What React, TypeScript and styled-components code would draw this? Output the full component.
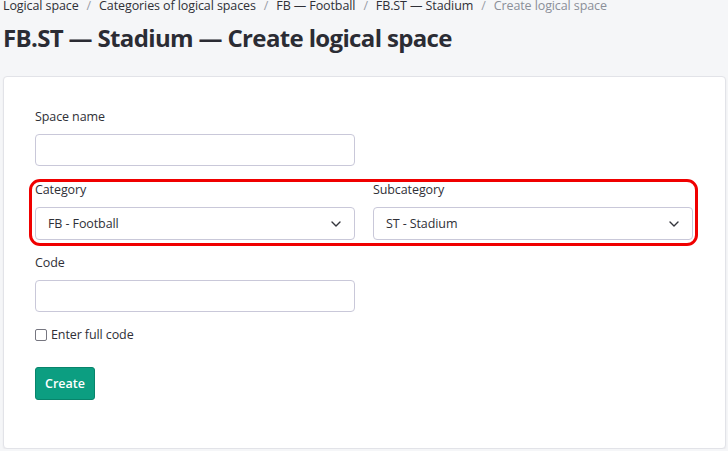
import React from "react";
import styled, { createGlobalStyle } from "styled-components";

const GlobalStyle = createGlobalStyle`
  html, body {
    margin: 0;
    background: #f5f6f8;
    font-family: "Open Sans", "Noto Sans", Arial, sans-serif;
    color: #2f3037;
  }
`;

type Crumb = { label: string; active?: boolean };

const crumbs: Crumb[] = [
  { label: "Logical space" },
  { label: "Categories of logical spaces" },
  { label: "FB — Football" },
  { label: "FB.ST — Stadium" },
  { label: "Create logical space", active: true },
];

const Chevron = () => (
  <svg width="12" height="12" viewBox="0 0 12 12" fill="none">
    <path d="M2 4l4 4 4-4" stroke="#34353c" strokeWidth="1.4" strokeLinecap="round" strokeLinejoin="round" />
  </svg>
);

type SelectProps = { label: string; value: string };

const SelectField = ({ label, value }: SelectProps) => (
  <Field>
    <Label>{label}</Label>
    <SelectBox>
      <span>{value}</span>
      <Chevron />
    </SelectBox>
  </Field>
);

export default function App() {
  return (
    <>
      <GlobalStyle />
      <Page>
        <Breadcrumbs>
          {crumbs.map((c, i) => (
            <React.Fragment key={c.label}>
              {i > 0 && <Sep>/</Sep>}
              <Crumb $active={c.active}>{c.label}</Crumb>
            </React.Fragment>
          ))}
        </Breadcrumbs>
        <Title>FB.ST — Stadium — Create logical space</Title>
        <Card>
          <Field>
            <Label>Space name</Label>
            <Input />
          </Field>
          <HighlightRow>
            <SelectField label="Category" value="FB - Football" />
            <SelectField label="Subcategory" value="ST - Stadium" />
          </HighlightRow>
          <Field>
            <Label>Code</Label>
            <Input />
          </Field>
          <CheckRow>
            <Box />
            Enter full code
          </CheckRow>
          <Button>Create</Button>
        </Card>
      </Page>
    </>
  );
}

const Page = styled.div`
  padding: 0 2px 0 3px;
`;

const Breadcrumbs = styled.nav`
  display: flex;
  align-items: center;
  font-size: 12.5px;
  letter-spacing: -0.1px;
  line-height: 16px;
  margin-top: -2px;
  white-space: nowrap;
`;

const Crumb = styled.span<{ $active?: boolean }>`
  color: ${(p) => (p.$active ? "#8b8f99" : "#2f3037")};
`;

const Sep = styled.span`
  color: #9a9ea8;
  margin: 0 8px;
`;

const Title = styled.h1`
  margin: 8px 0 0;
  font-size: 24px;
  line-height: 32px;
  font-weight: 700;
  color: #2b2c34;
  letter-spacing: -0.65px;
`;

const Card = styled.div`
  margin-top: 22px;
  background: #fff;
  border: 1px solid #e2e3e8;
  border-radius: 4px;
  box-shadow: 0 1px 2px rgba(0, 0, 0, 0.05);
  padding: 31px 31px 48px;
  display: flex;
  flex-direction: column;
  align-items: flex-start;
  gap: 14px;
`;

const Field = styled.div`
  display: flex;
  flex-direction: column;
  gap: 8px;
  width: 320px;
`;

const Label = styled.label`
  font-size: 12.5px;
  letter-spacing: -0.1px;
  line-height: 18px;
  color: #2f3037;
`;

const Input = styled.input`
  box-sizing: border-box;
  width: 320px;
  height: 32px;
  border: 1px solid #c9c8d9;
  border-radius: 4px;
  background: #fff;
  outline: none;
`;

const SelectBox = styled.div`
  box-sizing: border-box;
  height: 33px;
  border: 1px solid #c9c8d9;
  border-radius: 4px;
  display: flex;
  align-items: center;
  justify-content: space-between;
  padding: 0 12px;
  font-size: 12.5px;
  letter-spacing: -0.1px;
  color: #2f3037;
`;

const HighlightRow = styled.div`
  position: relative;
  display: flex;
  gap: 18px;
  margin-top: 1px;
  &::before {
    content: "";
    position: absolute;
    inset: -2px -5px -6px -6px;
    border: 3px solid #f00000;
    border-radius: 11px;
    pointer-events: none;
  }
`;

const CheckRow = styled.label`
  display: flex;
  align-items: center;
  gap: 4px;
  font-size: 12.5px;
  letter-spacing: -0.1px;
  line-height: 18px;
  color: #2f3037;
`;

const Box = styled.span`
  box-sizing: border-box;
  width: 12px;
  height: 12px;
  border: 1px solid #767680;
  border-radius: 2px;
  background: #fff;
`;

const Button = styled.button`
  margin-top: 9px;
  width: 60px;
  height: 33px;
  background: #0c9e81;
  border: 1px solid #08846b;
  border-radius: 3px;
  color: #fff;
  font-family: inherit;
  font-size: 12.5px;
  font-weight: 600;
`;
